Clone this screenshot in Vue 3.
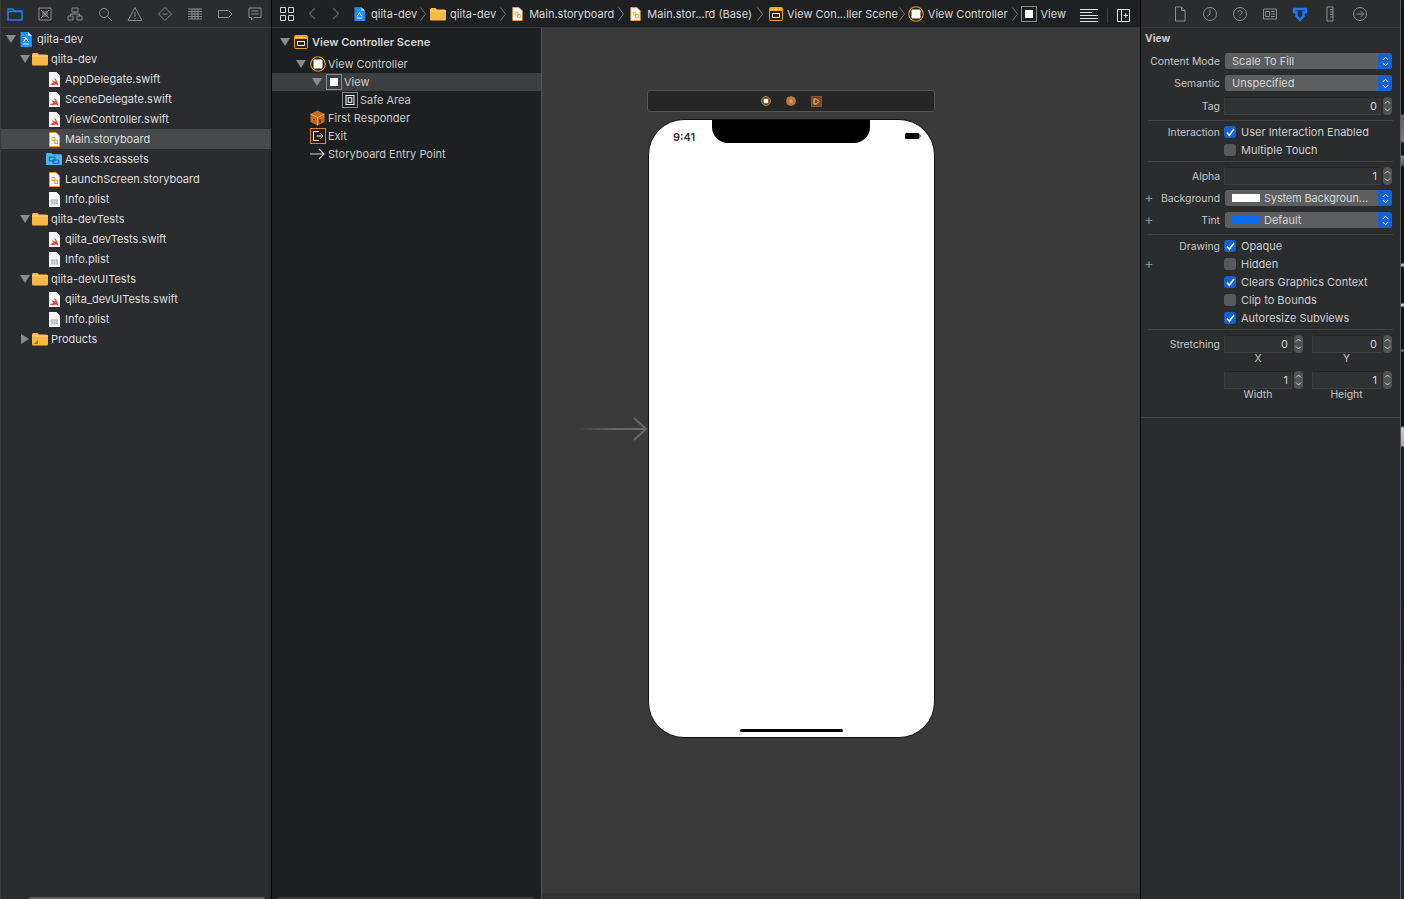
<template>
  <div class="xcode">
    <aside class="navigator">
      <div class="nav-tabs">
        <svg v-for="(t, i) in navTabs" :key="i" class="tab-icon" viewBox="0 0 16 16" fill="none" :stroke="i === 0 ? '#1d78ff' : '#8b8c8e'" :stroke-width="i === 0 ? 1.500 : 1">
          <path v-for="(d, j) in t" :key="j" :d="d" />
        </svg>
      </div>
      <div class="tree">
        <div v-for="row in files" :key="row.id" class="tree-row" :class="{ selected: row.selected }" :style="{ paddingLeft: 3 + row.depth * 14 + 'px' }">
          <span class="disclosure">
            <svg v-if="row.arrow === 'down'" width="10" height="8" viewBox="0 0 10 8"><path d="M0 0h10L5 8z" fill="#8a8b8d" /></svg>
            <svg v-if="row.arrow === 'right'" width="8" height="10" viewBox="0 0 8 10"><path d="M0 0v10l8-5z" fill="#8a8b8d" /></svg>
          </span>
          <span class="file-icon">
            <svg v-if="row.icon === 'project'" width="12" height="15" viewBox="0 0 12 15"><path d="M.5 0H8l4 4v11H.5z" fill="#1e90f0" /><path d="M8 0l4 4H8z" fill="#bfe0ff" /><path d="M3 12h6M3 5.500h3" stroke="#d7ecff" /><path d="M3.500 10L6 6l2.500 4" stroke="#fff" fill="none" /></svg>
            <svg v-if="row.icon === 'folder' || row.icon === 'products'" width="16" height="14" viewBox="0 0 16 14"><path d="M0 2.500A1.500 1.500 0 0 1 1.500 1h4L7 2.500h7.500A1.500 1.500 0 0 1 16 4v8.500a1 1 0 0 1-1 1H1a1 1 0 0 1-1-1z" fill="#f6b944" /><path d="M0 4h16" stroke="#ffd98a" stroke-width=".8" /><path v-if="row.icon === 'products'" d="M2 12L6 7.500V12z" fill="#a96f15" /></svg>
            <svg v-if="row.icon === 'assets'" width="16" height="14" viewBox="0 0 17 14"><path d="M0 2A1.500 1.500 0 0 1 1.500.5h4L7 2h8.500A1.500 1.500 0 0 1 17 3.500v9a1 1 0 0 1-1 1H1a1 1 0 0 1-1-1z" fill="#49b7ea" /><path d="M3.500 5h6v4h-6zM7.500 8h6v3.500h-6z" fill="none" stroke="#0d5b8c" /></svg>
            <svg v-if="row.icon === 'swift'" width="11" height="15" viewBox="0 0 11 15"><path d="M0 0h7.500L11 3.500V15H0z" fill="#f7f7f7" /><path d="M1 12.500c2 1.200 3.500.6 5 0 1.200 0 2 .6 2.700 1.200.5-1.500.2-3.200-1-4.800-.3-1.700-1.300-2.400-2.500-3l1.600 3.400C5 9.800 3.500 8.800 2.300 7.600l2.300 3.300c-1.200.6-2.400.6-3.600 1.600z" fill="#e8412f" /></svg>
            <svg v-if="row.icon === 'storyboard'" width="11" height="15" viewBox="0 0 11 15"><path d="M.5.500h6.500l3.500 3.500v10.500H.5z" fill="#fff" stroke="#f0a32c" /><path d="M3 5.500h3v3H3zM5.500 8h3v3.500h-3z" fill="none" stroke="#e39a2a" stroke-width=".9" /></svg>
            <svg v-if="row.icon === 'plist'" width="11" height="15" viewBox="0 0 11 15"><path d="M0 0h7.500L11 3.500V15H0z" fill="#f7f7f7" /><path d="M2 7.500h7v5H2z" fill="#a9aaac" /><path d="M2 9.200h7M2 10.900h7M4.300 7.500v5M6.700 7.500v5" stroke="#f7f7f7" stroke-width=".5" /></svg>
          </span>
          <span class="tree-label">{{ row.label }}</span>
        </div>
      </div>
      <div class="scroller"></div>
    </aside>

    <main class="editor">
      <header class="jumpbar">
        <svg class="grid-icon" width="14" height="14" viewBox="0 0 14 14" fill="none" stroke="#d6d6d6"><path d="M.5.500h5v5h-5zM8.500.500h5v5h-5zM.5 8.500h5v5h-5zM8.500 8.500h5v5h-5z" /></svg>
        <svg class="back-arrow" width="8" height="13" viewBox="0 0 8 13" fill="none" stroke="#5c5d5f" stroke-width="1.200"><path d="M7 1L1.500 6.500 7 12" /></svg>
        <svg class="next-arrow" width="8" height="13" viewBox="0 0 8 13" fill="none" stroke="#5c5d5f" stroke-width="1.200"><path d="M1 1l5.500 5.500L1 12" /></svg>
        <div v-for="c in crumbs" :key="c.id" class="crumb">
          <span class="crumb-icon" :style="{ width: c.box + 'px' }">
            <svg v-if="c.icon === 'project'" width="11" height="14" viewBox="0 0 12 15"><path d="M.5 0H8l4 4v11H.5z" fill="#1e90f0" /><path d="M8 0l4 4H8z" fill="#bfe0ff" /><path d="M3.500 10L6 6l2.500 4M3 12h6" stroke="#fff" fill="none" /></svg>
            <svg v-if="c.icon === 'folder'" width="16" height="14" viewBox="0 0 16 14"><path d="M0 2.500A1.500 1.500 0 0 1 1.500 1h4L7 2.500h7.500A1.500 1.500 0 0 1 16 4v8.500a1 1 0 0 1-1 1H1a1 1 0 0 1-1-1z" fill="#f6b944" /><path d="M0 4h16" stroke="#ffd98a" stroke-width=".8" /></svg>
            <svg v-if="c.icon === 'storyboard'" width="11" height="14" viewBox="0 0 11 15"><path d="M.5.500h6.500l3.500 3.500v10.500H.5z" fill="#fff" stroke="#f0a32c" /><path d="M3 5.500h3v3H3zM5.500 8h3v3.500h-3z" fill="none" stroke="#e39a2a" stroke-width=".9" /></svg>
            <svg v-if="c.icon === 'scene'" width="14" height="14" viewBox="0 0 14 14"><rect x=".5" y=".5" width="13" height="13" rx="1" fill="#2a2118" stroke="#f5a623" /><path d="M1 1h12v3H1z" fill="#f5a623" /><path d="M2.500 2.500h9" stroke="#fff" stroke-dasharray="1.500 1" /><path d="M3.500 6.500h7v4h-7z" fill="none" stroke="#fff" /></svg>
            <svg v-if="c.icon === 'controller'" width="16" height="16" viewBox="0 0 16 16"><circle cx="8" cy="8" r="7.300" fill="#26221c" stroke="#e99a1c" stroke-width="1.100" /><rect x="3.500" y="3.500" width="9" height="9" rx="1" fill="#fff" /></svg>
            <svg v-if="c.icon === 'view'" width="16" height="16" viewBox="0 0 16 16"><rect x=".5" y=".5" width="15" height="15" fill="none" stroke="#8a8b8d" /><rect x="4" y="4" width="8" height="8" fill="#fff" /></svg>
          </span>
          <span class="crumb-label">{{ c.label }}</span>
          <svg v-if="c.after" class="crumb-chevron" :style="{ marginLeft: c.before + 'px', marginRight: c.after + 'px' }" width="6" height="14" viewBox="0 0 6 14" fill="none" stroke="#77787a"><path d="M.5.500L5.500 7 .5 13.500" /></svg>
        </div>
        <div class="jump-tools">
          <svg width="18" height="13" viewBox="0 0 18 13" stroke="#e4e4e4" fill="none"><path d="M0 .5h18M0 3.500h12M0 6.500h18M0 9.500h18M0 12.500h18" /></svg>
          <span class="tool-sep"></span>
          <svg width="13" height="13" viewBox="0 0 13 13" stroke="#e4e4e4" fill="none"><path d="M.5.500h12v12H.5zM4.500.500v12M6.500 6.500h4.500M8.750 4.250v4.500" /></svg>
        </div>
      </header>

      <div class="workspace">
        <section class="outline">
          <div v-for="o in outline" :key="o.id" class="outline-row" :class="[o.kind, { selected: o.selected }]" :style="{ paddingLeft: o.depth * 16 + 6 + 'px' }">
            <span class="disclosure">
              <svg v-if="o.arrow" width="10" height="8" viewBox="0 0 10 8"><path d="M0 0h10L5 8z" fill="#8a8b8d" /></svg>
            </span>
            <span class="outline-icon">
              <svg v-if="o.icon === 'scene'" width="14" height="14" viewBox="0 0 14 14"><rect x=".5" y=".5" width="13" height="13" rx="1" fill="#2a2118" stroke="#f5a623" /><path d="M1 1h12v3H1z" fill="#f5a623" /><path d="M2.500 2.500h9" stroke="#fff" stroke-dasharray="1.500 1" /><path d="M3.500 6.500h7v4h-7z" fill="none" stroke="#fff" /></svg>
              <svg v-if="o.icon === 'controller'" width="16" height="16" viewBox="0 0 16 16"><circle cx="8" cy="8" r="7.300" fill="#26221c" stroke="#e99a1c" stroke-width="1.100" /><rect x="3.500" y="3.500" width="9" height="9" rx="1" fill="#fff" /></svg>
              <svg v-if="o.icon === 'view'" width="16" height="16" viewBox="0 0 16 16"><rect x=".5" y=".5" width="15" height="15" fill="none" stroke="#8a8b8d" /><rect x="4" y="4" width="8" height="8" fill="#fff" /></svg>
              <svg v-if="o.icon === 'safe'" width="16" height="16" viewBox="0 0 16 16" fill="none"><rect x=".5" y=".5" width="15" height="15" stroke="#8a8b8d" /><rect x="4" y="3.500" width="8" height="9" stroke="#fff" /><rect x="6.200" y="5.700" width="3.600" height="4.600" stroke="#fff" /></svg>
              <svg v-if="o.icon === 'responder'" width="15" height="16" viewBox="0 0 15 16"><path d="M7.500.5l7 3.500v8l-7 3.500-7-3.500V4z" fill="#c96a1c" /><path d="M.5 4l7 3.500 7-3.500M7.500 7.500v8" stroke="#f0a860" fill="none" /><path d="M3 9.500h2M10 9v4" stroke="#2a1a08" stroke-width="1.200" /></svg>
              <svg v-if="o.icon === 'exit'" width="16" height="16" viewBox="0 0 16 16" fill="none"><rect x=".5" y=".5" width="15" height="15" fill="#2a1c10" stroke="#e8801e" /><path d="M9 3.500H3.500v9H9" stroke="#fff" /><path d="M6.500 8H13M10.500 5.500L13 8l-2.500 2.500" stroke="#fff" /></svg>
              <svg v-if="o.icon === 'entry'" width="15" height="12" viewBox="0 0 15 12" fill="none" stroke="#d8d8d8" stroke-width="1.100"><path d="M0 6h14M9 1l5 5-5 5" /></svg>
            </span>
            <span class="outline-label">{{ o.label }}</span>
          </div>
          <div class="scroller"></div>
        </section>

        <section class="canvas">
          <div class="scene-dock">
            <svg width="10" height="10" viewBox="0 0 10 10"><circle cx="5" cy="5" r="4.500" fill="#5a4a2c" stroke="#b5862e" /><rect x="2.800" y="2.800" width="4.400" height="4.400" fill="#fff" /></svg>
            <svg width="10" height="10" viewBox="0 0 10 10"><path d="M5 0l4 1.500L10 5 9 8.500 5 10 1 8.500 0 5l1-3.500z" fill="#b9763c" /><path d="M3.500 3.500h3v3h-3z" fill="#dda06c" /></svg>
            <svg width="11" height="11" viewBox="0 0 11 11" fill="none"><rect x=".5" y=".5" width="10" height="10" fill="#7a4a1e" stroke="#8c5522" /><path d="M3 3h2.500L8 5.500 5.500 8H3z" stroke="#e0c8ac" /></svg>
          </div>
          <div class="entry-arrow">
            <svg width="70" height="24" viewBox="0 0 70 24" fill="none">
              <defs><linearGradient id="fade" x1="0" x2="1" y1="0" y2="0"><stop offset="0" stop-color="#6c6c6c" stop-opacity="0" /><stop offset=".5" stop-color="#6c6c6c" stop-opacity=".8" /><stop offset="1" stop-color="#6c6c6c" /></linearGradient></defs>
              <rect x="0" y="11" width="68" height="2" fill="url(#fade)" />
              <path d="M56 1l12 11-12 11" stroke="#666" stroke-width="2" />
            </svg>
          </div>
          <div class="phone">
            <div class="notch"></div>
            <span class="phone-time">9:41</span>
            <svg class="phone-battery" width="16" height="6" viewBox="0 0 16 6"><rect x="0" y="0" width="14.500" height="6" rx="1.500" fill="#000" /><rect x="15" y="2" width="1" height="2" fill="#888" /></svg>
            <div class="home-bar"></div>
          </div>
          <div class="canvas-foot"></div>
        </section>
      </div>
    </main>

    <aside class="inspector">
      <div class="insp-tabs">
        <svg v-for="(t, i) in inspTabs" :key="i" class="tab-icon" viewBox="0 0 16 16" fill="none" :stroke="i === 4 ? '#1d78ff' : '#8b8c8e'" :stroke-width="i === 4 ? 2.400 : 1">
          <path v-for="(d, j) in t" :key="j" :d="d" />
        </svg>
      </div>
      <div class="insp-title">View</div>

      <div class="insp-section first">
        <div class="form-row">
          <span class="plus"></span><label>Content Mode</label>
          <div class="select"><span class="select-text">Scale To Fill</span><span class="select-cap"><svg width="7" height="11" viewBox="0 0 7 11" fill="none" stroke="#fff"><path d="M.8 4L3.500 1.200 6.200 4M.8 7l2.700 2.800L6.200 7" /></svg></span></div>
        </div>
        <div class="form-row">
          <span class="plus"></span><label>Semantic</label>
          <div class="select"><span class="select-text">Unspecified</span><span class="select-cap"><svg width="7" height="11" viewBox="0 0 7 11" fill="none" stroke="#fff"><path d="M.8 4L3.500 1.200 6.200 4M.8 7l2.700 2.800L6.200 7" /></svg></span></div>
        </div>
        <div class="form-row">
          <span class="plus"></span><label>Tag</label>
          <div class="field">0</div>
          <span class="stepper"><svg width="7" height="14" viewBox="0 0 7 14" fill="none" stroke="#cfcfcf"><path d="M1 4.500L3.500 2 6 4.500M1 9.500L3.500 12 6 9.500" /></svg></span>
        </div>
      </div>
      <hr />

      <div class="insp-section checks">
        <div v-for="c in interactionChecks" :key="c.label" class="form-row check-row">
          <span class="plus"></span><label>{{ c.title }}</label>
          <span class="checkbox" :class="{ on: c.on }"><svg v-if="c.on" width="9" height="9" viewBox="0 0 9 9" fill="none" stroke="#fff" stroke-width="1.500"><path d="M1 4.500l2.300 2.700L8 1" /></svg></span>
          <span class="check-text">{{ c.label }}</span>
        </div>
      </div>
      <hr />

      <div class="insp-section appearance">
        <div class="form-row">
          <span class="plus"></span><label>Alpha</label>
          <div class="field">1</div>
          <span class="stepper"><svg width="7" height="14" viewBox="0 0 7 14" fill="none" stroke="#cfcfcf"><path d="M1 4.500L3.500 2 6 4.500M1 9.500L3.500 12 6 9.500" /></svg></span>
        </div>
        <div class="form-row">
          <span class="plus">+</span><label>Background</label>
          <div class="select"><span class="swatch white"></span><span class="select-text swatched tight">System Backgroun…</span><span class="select-cap"><svg width="7" height="11" viewBox="0 0 7 11" fill="none" stroke="#fff"><path d="M.8 4L3.500 1.200 6.200 4M.8 7l2.700 2.800L6.200 7" /></svg></span></div>
        </div>
        <div class="form-row">
          <span class="plus">+</span><label>Tint</label>
          <div class="select"><span class="swatch blue"></span><span class="select-text swatched">Default</span><span class="select-cap"><svg width="7" height="11" viewBox="0 0 7 11" fill="none" stroke="#fff"><path d="M.8 4L3.500 1.200 6.200 4M.8 7l2.700 2.800L6.200 7" /></svg></span></div>
        </div>
      </div>
      <hr />

      <div class="insp-section checks">
        <div v-for="c in drawingChecks" :key="c.label" class="form-row check-row">
          <span class="plus">{{ c.plus ? '+' : '' }}</span><label>{{ c.title }}</label>
          <span class="checkbox" :class="{ on: c.on }"><svg v-if="c.on" width="9" height="9" viewBox="0 0 9 9" fill="none" stroke="#fff" stroke-width="1.500"><path d="M1 4.500l2.300 2.700L8 1" /></svg></span>
          <span class="check-text">{{ c.label }}</span>
        </div>
      </div>
      <hr />

      <div class="insp-section stretching">
        <div v-for="r in stretchRows" :key="r.id" class="stretch-row">
          <div class="form-row">
            <span class="plus"></span><label>{{ r.title }}</label>
            <div class="pair">
              <div class="field">{{ r.a }}</div>
              <span class="stepper"><svg width="7" height="14" viewBox="0 0 7 14" fill="none" stroke="#cfcfcf"><path d="M1 4.500L3.500 2 6 4.500M1 9.500L3.500 12 6 9.500" /></svg></span>
            </div>
            <div class="pair second">
              <div class="field">{{ r.b }}</div>
              <span class="stepper"><svg width="7" height="14" viewBox="0 0 7 14" fill="none" stroke="#cfcfcf"><path d="M1 4.500L3.500 2 6 4.500M1 9.500L3.500 12 6 9.500" /></svg></span>
            </div>
          </div>
          <div class="caption-row">
            <span class="caption">{{ r.captionA }}</span>
            <span class="caption second">{{ r.captionB }}</span>
          </div>
        </div>
      </div>
      <hr class="full" />
    </aside>

    <div class="desktop-edge"></div>
  </div>
</template>

<script setup>
const navTabs = [
  ['M1 3h5l1.500 2H15v9H1z', 'M1 5.500h14'],
  ['M2 2h12v12H2z', 'M4 4l8 8M12 4l-8 8', 'M6 6h4v4H6z'],
  ['M5 2h6v4H5z', 'M1 10h5v4H1zM10 10h5v4h-5z', 'M8 6v2H3.500v2M8 8h4.500v2'],
  ['M11.500 7a4.500 4.500 0 1 1-9 0 4.500 4.500 0 0 1 9 0z', 'M10.500 10.500L15 15'],
  ['M8 1.500L15 14.500H1z', 'M8 6v5M8 12v1.200'],
  ['M8 1.500L14.500 8 8 14.500 1.500 8z', 'M5.500 8h5'],
  ['M1 3h14M1 5.500h14M1 8h14M1 10.500h14M1 13h14', 'M5 3v10M8 3v10M11 3v10'],
  ['M1.500 4.500h10l3.500 3.500-3.500 3.500h-10z'],
  ['M2 2h12v9.500H7L4.500 14v-2.500H2z', 'M4.500 5h7M4.500 8h7']
]

const inspTabs = [
  ['M3.500 1h6L13 4.500V15H3.500z', 'M9.500 1v3.500H13'],
  ['M14.500 8a6.500 6.500 0 1 1-13 0 6.500 6.500 0 0 1 13 0z', 'M8 3.500V8l-3 2.500'],
  ['M14.500 8a6.500 6.500 0 1 1-13 0 6.500 6.500 0 0 1 13 0z', 'M6 6.300C6 4 10 4 10 6.300 10 8 8 8 8 9.500M8 11v1.200'],
  ['M1.500 3h13v10h-13z', 'M3.500 5.500h4v5h-4z', 'M9 5.500h4M9 8h4M9 10.500h4'],
  ['M2 3h12v3h-2.500v4L8 14l-3.500-4V6H2z'],
  ['M5 1h6v14H5z', 'M8 3.500h3M8 6h3M8 8.500h3M8 11h3'],
  ['M14.500 8a6.500 6.500 0 1 1-13 0 6.500 6.500 0 0 1 13 0z', 'M4.500 8h7M8.500 5l3 3-3 3']
]

const files = [
  { id: 1, depth: 0, arrow: 'down', icon: 'project', label: 'qiita-dev' },
  { id: 2, depth: 1, arrow: 'down', icon: 'folder', label: 'qiita-dev' },
  { id: 3, depth: 2, icon: 'swift', label: 'AppDelegate.swift' },
  { id: 4, depth: 2, icon: 'swift', label: 'SceneDelegate.swift' },
  { id: 5, depth: 2, icon: 'swift', label: 'ViewController.swift' },
  { id: 6, depth: 2, icon: 'storyboard', label: 'Main.storyboard', selected: true },
  { id: 7, depth: 2, icon: 'assets', label: 'Assets.xcassets' },
  { id: 8, depth: 2, icon: 'storyboard', label: 'LaunchScreen.storyboard' },
  { id: 9, depth: 2, icon: 'plist', label: 'Info.plist' },
  { id: 10, depth: 1, arrow: 'down', icon: 'folder', label: 'qiita-devTests' },
  { id: 11, depth: 2, icon: 'swift', label: 'qiita_devTests.swift' },
  { id: 12, depth: 2, icon: 'plist', label: 'Info.plist' },
  { id: 13, depth: 1, arrow: 'down', icon: 'folder', label: 'qiita-devUITests' },
  { id: 14, depth: 2, icon: 'swift', label: 'qiita_devUITests.swift' },
  { id: 15, depth: 2, icon: 'plist', label: 'Info.plist' },
  { id: 16, depth: 1, arrow: 'right', icon: 'products', label: 'Products' }
]

// box = icon slot width, before/after = space round the chevron
const crumbs = [
  { id: 1, icon: 'project', box: 17, label: 'qiita-dev', before: 3, after: 4 },
  { id: 2, icon: 'folder', box: 20, label: 'qiita-dev', before: 4, after: 6 },
  { id: 3, icon: 'storyboard', box: 17, label: 'Main.storyboard', before: 4, after: 6 },
  { id: 4, icon: 'storyboard', box: 17, label: 'Main.stor...rd (Base)', before: 5, after: 6 },
  { id: 5, icon: 'scene', box: 18, label: 'View Con...ller Scene', before: 1, after: 3 },
  { id: 6, icon: 'controller', box: 20, label: 'View Controller', before: 4, after: 3 },
  { id: 7, icon: 'view', box: 20, label: 'View' }
]

const outline = [
  { id: 1, kind: 'scene', depth: 0, arrow: true, icon: 'scene', label: 'View Controller Scene' },
  { id: 2, depth: 1, arrow: true, icon: 'controller', label: 'View Controller' },
  { id: 3, depth: 2, arrow: true, icon: 'view', label: 'View', selected: true },
  { id: 4, depth: 3, icon: 'safe', label: 'Safe Area' },
  { id: 5, depth: 1, icon: 'responder', label: 'First Responder' },
  { id: 6, depth: 1, icon: 'exit', label: 'Exit' },
  { id: 7, depth: 1, icon: 'entry', label: 'Storyboard Entry Point' }
]

const interactionChecks = [
  { title: 'Interaction', label: 'User Interaction Enabled', on: true },
  { title: '', label: 'Multiple Touch', on: false }
]

const drawingChecks = [
  { title: 'Drawing', label: 'Opaque', on: true },
  { title: '', label: 'Hidden', on: false, plus: true },
  { title: '', label: 'Clears Graphics Context', on: true },
  { title: '', label: 'Clip to Bounds', on: false },
  { title: '', label: 'Autoresize Subviews', on: true }
]

const stretchRows = [
  { id: 1, title: 'Stretching', a: 0, b: 0, captionA: 'X', captionB: 'Y' },
  { id: 2, title: '', a: 1, b: 1, captionA: 'Width', captionB: 'Height' }
]
</script>

<style>
html, body {
  margin: 0;
  background: #2a2b2e;
}
</style>

<style scoped>
.xcode {
  display: flex;
  width: 1404px;
  height: 899px;
  overflow: hidden;
  font-family: Inter, "Liberation Sans", sans-serif;
  font-size: 11px;
  color: #dedede;
}

.navigator {
  position: relative;
  flex: 0 0 272px;
  background: #2a2c30;
  border-left: 1px solid #3a3b3d;
  border-right: 1px solid #000;
  box-sizing: border-box;
}

.nav-tabs {
  display: flex;
  height: 28px;
  box-sizing: border-box;
  border-bottom: 1px solid #3d3e40;
  padding-left: 6px;
  align-items: center;
  gap: 14px;
}

.tab-icon {
  width: 16px;
  height: 16px;
  flex: none;
  margin-top: 1px;
}

.tree {
  padding-top: 1px;
}

.tree-row {
  display: flex;
  align-items: center;
  height: 20px;
}

.tree-row.selected {
  background: #47484a;
}

.disclosure {
  flex: 0 0 14px;
  display: flex;
  align-items: center;
  justify-content: center;
}

.file-icon {
  flex: 0 0 16px;
  margin-right: 3px;
  display: flex;
  align-items: center;
  justify-content: center;
}

.tree-label {
  white-space: nowrap;
}

.scroller {
  position: absolute;
  left: 28px;
  right: 6px;
  bottom: 0;
  height: 2px;
  background: #5f6062;
  border-radius: 2px 2px 0 0;
}

.editor {
  flex: 0 0 869px;
  display: flex;
  flex-direction: column;
  border-right: 1px solid #000;
  box-sizing: border-box;
}

.jumpbar {
  position: relative;
  display: flex;
  align-items: center;
  height: 28px;
  flex: none;
  background: #1f2022;
  border-bottom: 1px solid #333436;
  box-sizing: border-box;
  padding-left: 8px;
}

.grid-icon {
  margin-right: 14px;
}

.back-arrow {
  margin-right: 16px;
}

.next-arrow {
  margin-right: 14px;
}

.crumb {
  display: flex;
  align-items: center;
  white-space: nowrap;
  color: #d8d8d8;
  line-height: 28px;
}

.crumb-icon {
  display: flex;
  align-items: center;
}

.jump-tools {
  position: absolute;
  right: 10px;
  top: 8px;
  display: flex;
  align-items: center;
}

.tool-sep {
  width: 1px;
  height: 15px;
  background: #3c3d3f;
  margin: 0 9px;
}

.workspace {
  flex: 1;
  display: flex;
  min-height: 0;
}

.outline {
  position: relative;
  flex: 0 0 270px;
  background: #1e1f21;
  border-right: 1px solid #58595b;
  box-sizing: border-box;
}

.outline .scroller {
  left: 5px;
  right: 7px;
  background: #3c3d3f;
}

.outline-row {
  display: flex;
  align-items: center;
  height: 18px;
  color: #c9c9c9;
  white-space: nowrap;
}

.outline-row.scene {
  height: 24px;
  margin: 2px 0 1px;
  font-weight: 600;
  color: #d4d4d4;
}

.outline-row.selected {
  background: #3d3e40;
}

.outline-icon {
  flex: 0 0 16px;
  margin-left: 2px;
  margin-right: 2px;
  display: flex;
  align-items: center;
  justify-content: flex-start;
}

.canvas {
  position: relative;
  flex: 1;
  background: #3a3a3a;
}

.canvas-foot {
  position: absolute;
  left: 0;
  right: 0;
  bottom: 0;
  height: 6px;
  background: #333436;
}

.scene-dock {
  position: absolute;
  left: 105px;
  top: 62px;
  width: 288px;
  height: 22px;
  box-sizing: border-box;
  background: #262626;
  border: 1px solid #555;
  border-radius: 3px;
  display: flex;
  align-items: center;
  justify-content: center;
  gap: 15px;
}

.entry-arrow {
  position: absolute;
  left: 36px;
  top: 389px;
  line-height: 0;
}

.phone {
  position: absolute;
  left: 106px;
  top: 91px;
  width: 287px;
  height: 619px;
  box-sizing: border-box;
  background: #fff;
  border: 1px solid #111;
  border-radius: 36px;
  overflow: hidden;
}

.notch {
  position: absolute;
  left: 63px;
  top: -1px;
  width: 158px;
  height: 24px;
  background: #000;
  border-radius: 0 0 16px 16px;
}

.phone-time {
  position: absolute;
  left: 24px;
  top: 10px;
  font-size: 11px;
  font-weight: 600;
  color: #333;
}

.phone-battery {
  position: absolute;
  right: 13px;
  top: 13px;
}

.home-bar {
  position: absolute;
  left: 91px;
  bottom: 5px;
  width: 103px;
  height: 3px;
  background: #000;
  border-radius: 2px;
}

.inspector {
  flex: 0 0 260px;
  min-width: 0;
  background: #2b2c2e;
  border-right: 1px solid #5a5b5d;
  box-sizing: border-box;
  color: #c6c6c6;
}

.insp-tabs {
  display: flex;
  align-items: center;
  height: 28px;
  padding-left: 31px;
  gap: 14px;
  box-sizing: border-box;
  border-bottom: 1px solid #38393b;
}

.insp-title {
  height: 20px;
  line-height: 21px;
  padding-left: 4px;
  font-weight: 700;
  font-size: 10.300px;
  color: #c8c8c8;
}

hr {
  margin: 0 7px 0 7px;
  height: 1px;
  border: 0;
  background: #414244;
}

hr.full {
  margin: 0;
}

.insp-section {
  display: flex;
  flex-direction: column;
}

.insp-section.first {
  padding: 5px 0;
  gap: 6px;
}

.insp-section.checks {
  padding: 2px 0;
}

.insp-section.appearance {
  padding: 5px 0 6px;
  gap: 6px;
}

.insp-section.appearance .form-row:first-child {
  margin-bottom: -1px;
}

.insp-section.stretching {
  padding: 5px 0 16px;
  gap: 6px;
}

.form-row {
  display: flex;
  align-items: center;
}

.plus {
  flex: 0 0 16px;
  text-align: center;
  font-size: 14px;
  line-height: 12px;
  margin-bottom: 2px;
  color: #8e8f91;
}

.form-row label {
  flex: 0 0 63px;
  min-width: 0;
  text-align: right;
  white-space: nowrap;
  direction: rtl;
  margin-right: 4px;
  font-size: 10.400px;
  color: #c6c6c6;
}

.select {
  position: relative;
  flex: 0 0 167px;
  height: 16px;
  margin-left: 1px;
  background: #5d5e60;
  border-radius: 3px;
  overflow: hidden;
  display: flex;
  align-items: center;
  color: #d4d4d4;
}

.select-text {
  padding-left: 7px;
  white-space: nowrap;
}

.select-text.swatched {
  padding-left: 4px;
}

.select-text.tight {
  letter-spacing: -0.17px;
}

.select-cap {
  position: absolute;
  right: 0;
  top: 0;
  width: 14px;
  height: 16px;
  background: #1462d2;
  display: flex;
  align-items: center;
  justify-content: center;
}

.swatch {
  flex: none;
  width: 28px;
  height: 8px;
  margin-left: 7px;
}

.swatch.white {
  background: #fff;
}

.swatch.blue {
  background: #0a6cf5;
}

.field {
  flex: 1;
  height: 18px;
  line-height: 17px;
  box-sizing: border-box;
  background: #313234;
  border-top: 1px solid #232426;
  border-left: 1px solid #3b3c3e;
  border-right: 1px solid #3b3c3e;
  border-bottom: 1px solid #3e3f41;
  text-align: right;
  padding-right: 3px;
  color: #d6d6d6;
}

.form-row > .field {
  flex: 0 0 157px;
}

.stepper {
  flex: none;
  width: 9px;
  height: 18px;
  margin-left: 2px;
  background: #525355;
  border-radius: 4px;
  display: flex;
  align-items: center;
  justify-content: center;
}

.check-row {
  height: 18px;
}

.checkbox {
  flex: none;
  width: 12px;
  height: 12px;
  box-sizing: border-box;
  border-radius: 3px;
  background: #58595b;
  display: flex;
  align-items: center;
  justify-content: center;
}

.checkbox.on {
  background: #1462d2;
}

.check-text {
  margin-left: 5px;
  white-space: nowrap;
  color: #cecece;
}

.stretch-row {
  display: flex;
  flex-direction: column;
}

.pair {
  flex: 0 0 79px;
  display: flex;
  align-items: center;
}

.pair.second {
  flex: 0 0 80px;
  margin-left: 9px;
}

.caption-row {
  display: flex;
  height: 12px;
  line-height: 12px;
  padding-left: 83px;
  font-size: 10.400px;
  color: #c6c6c6;
}

.caption {
  width: 68px;
  text-align: center;
}

.caption.second {
  width: 69px;
  margin-left: 20px;
}

.desktop-edge {
  flex: 1;
  background: linear-gradient(to bottom,
    #14161a 0, #0f1013 114px, #6b5a62 115px, #8a7580 141px, #1c1c1e 143px,
    #111214 155px, #8a8a8a 156px, #55565a 165px, #111214 167px,
    #111214 263px, #bbb 264px, #bbb 266px, #111214 267px,
    #111214 303px, #ccc 304px, #ccc 306px, #111214 307px,
    #111214 349px, #777 350px, #777 351px, #111214 352px,
    #111214 426px, #ccc 428px, #aaa 446px, #0e2238 447px, #0f2740 899px);
}
</style>
